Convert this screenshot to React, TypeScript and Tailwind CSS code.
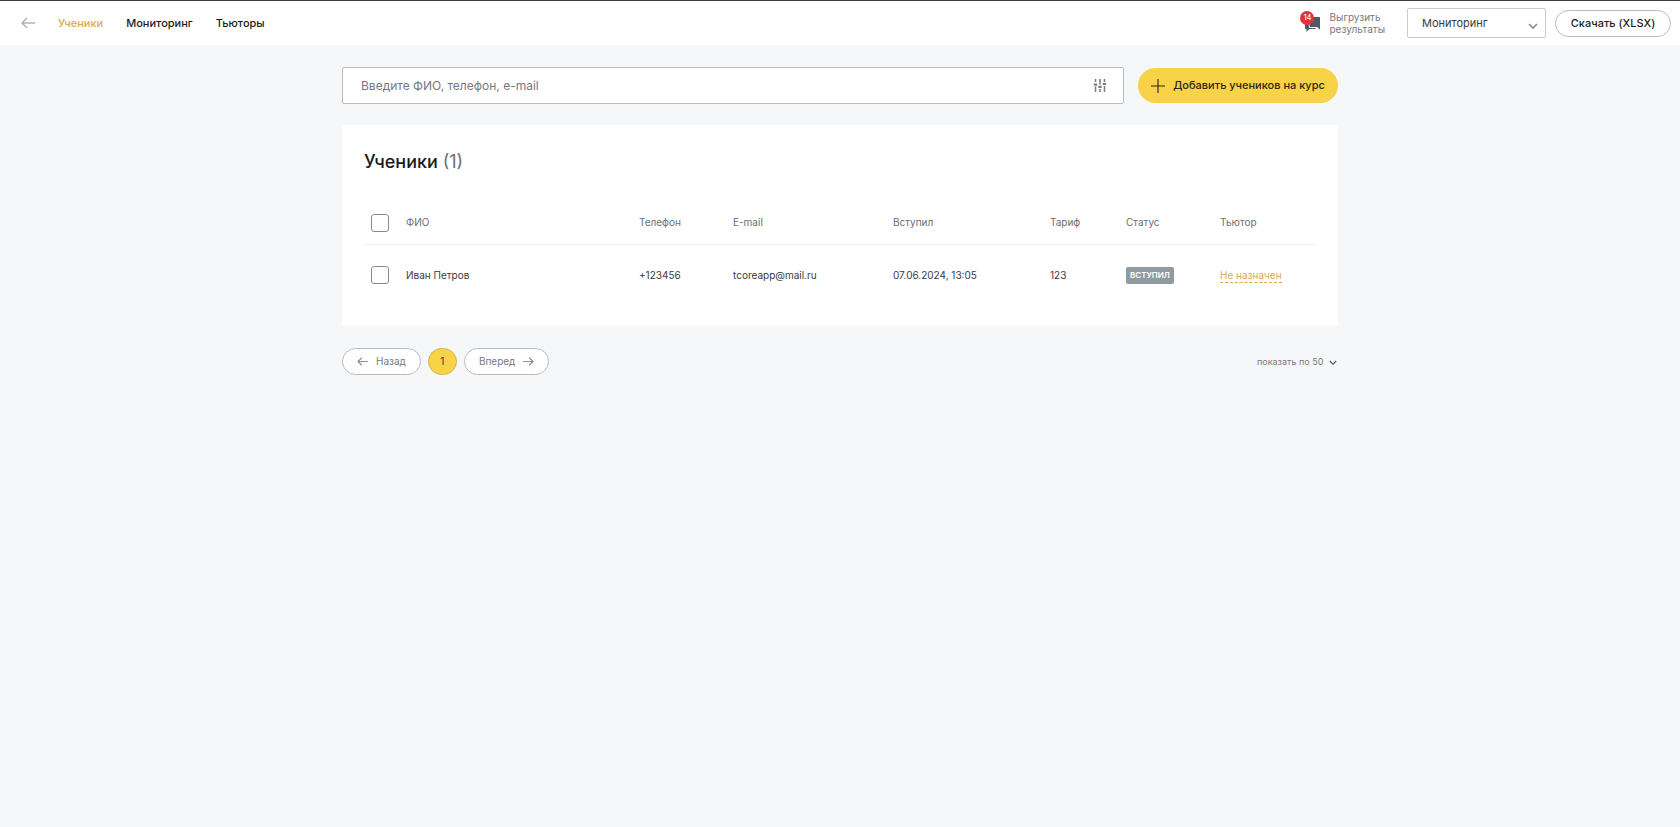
import React, { useState } from 'react';

interface IconProps {
    className?: string;
}

interface Student {
    id: number;
    name: string;
    phone: string;
    email: string;
    joinedAt: string;
    tariff: string;
    status: string;
    tutor: string | null;
}

const students: Student[] = [
    {
        id: 1,
        name: 'Иван Петров',
        phone: '+123456',
        email: 'tcoreapp@mail.ru',
        joinedAt: '07.06.2024, 13:05',
        tariff: '123',
        status: 'Вступил',
        tutor: null,
    },
];

const ArrowLeftIcon: React.FC<IconProps> = ({ className }) => (
    <svg className={className} viewBox="0 0 14 12" fill="none" stroke="currentColor" strokeWidth="1.5" aria-hidden="true">
        <path d="M14 6H1M6 1L1 6l5 5" />
    </svg>
);

const ArrowRightIcon: React.FC<IconProps> = ({ className }) => (
    <svg className={className} viewBox="0 0 14 12" fill="none" stroke="currentColor" strokeWidth="1.5" aria-hidden="true">
        <path d="M0 6h13M8 1l5 5-5 5" />
    </svg>
);

const ChevronIcon: React.FC<IconProps> = ({ className }) => (
    <svg className={className} viewBox="0 0 10 7" fill="none" stroke="currentColor" strokeWidth="1.6" aria-hidden="true">
        <path d="M1 1l4 4 4-4" />
    </svg>
);

const PlusIcon: React.FC<IconProps> = ({ className }) => (
    <svg className={className} viewBox="0 0 14 14" fill="none" stroke="currentColor" strokeWidth="1.1" aria-hidden="true">
        <path d="M7 0v14M0 7h14" />
    </svg>
);

const SlidersIcon: React.FC<IconProps> = ({ className }) => (
    <svg className={className} viewBox="0 0 14 13" fill="none" stroke="currentColor" strokeWidth="1.6" aria-hidden="true">
        <path d="M2.5 0v3M2.5 7.5V13M7 0v5.5M7 10v3M11.5 0v3M11.5 7v6" />
        <path d="M.8 5.6h3.4M5.3 7.8h3.4M9.8 5h3.4" strokeWidth="2.2" />
    </svg>
);

const ChatIcon: React.FC<IconProps> = ({ className }) => (
    <svg className={className} viewBox="0 0 15 15" fill="currentColor" aria-hidden="true">
        <path d="M5 0h9a1 1 0 0 1 1 1v11.8L12.3 10H4.6V.4z" />
        <path d="M0 4.5h3.8V10a1.1 1.1 0 0 0 1.1 1.1h5.8V12H4.4l-2.9 3v-3H1a1 1 0 0 1-1-1z" />
    </svg>
);

const Header: React.FC = () => (
    <header className="flex h-[45px] items-center justify-between border-t border-[#3d3b3d] bg-white pl-[21px] pr-[9px]">
        <nav className="flex items-center gap-[23px] text-[11px] font-medium text-[#1c1c1e]">
            <a href="#back" aria-label="Назад" className="text-[#b4b4b4]">
                <ArrowLeftIcon className="h-[12px] w-[14px]" />
            </a>
            <a href="#students" className="text-[#dba94e]">Ученики</a>
            <a href="#monitoring">Мониторинг</a>
            <a href="#tutors">Тьюторы</a>
        </nav>
        <div className="flex items-center">
            <a href="#export" className="mr-[22px] flex items-center gap-[9px] text-[10px] leading-[12px] text-[#77797c]">
                <span className="relative pl-[5px] pt-[2px]">
                    <ChatIcon className="h-[15px] w-[15px] text-[#4d5a63]" />
                    <span className="absolute -top-[4px] left-0 flex h-[14px] w-[14px] items-center justify-center rounded-full bg-[#e0323c] text-[7px] font-medium text-white">14</span>
                </span>
                <span>Выгрузить<br />результаты</span>
            </a>
            <div className="relative mr-[9px]">
                <select aria-label="Тип отчёта" className="h-[30px] w-[139px] appearance-none rounded-[2px] border border-[#c9cbce] bg-white pl-[14px] text-[11px] text-[#3a3b3d]">
                    <option>Мониторинг</option>
                </select>
                <ChevronIcon className="pointer-events-none absolute right-[8px] top-[15px] h-[7px] w-[10px] text-[#8a8c8e]" />
            </div>
            <button className="h-[27px] w-[116px] rounded-full border border-[#b9bbbd] bg-white text-[11px] font-medium text-[#1c1c1e]">
                Скачать (XLSX)
            </button>
        </div>
    </header>
);

const checkboxClass = 'block h-[18px] w-[18px] appearance-none rounded-[3px] border border-[#858b90] bg-white checked:bg-[#f8d347]';

const StudentsTable: React.FC = () => {
    const [selected, setSelected] = useState<number[]>([]);
    const allSelected = selected.length === students.length;

    const toggle = (id: number) => {
        setSelected(selected.includes(id) ? selected.filter((s) => s !== id) : [...selected, id]);
    };

    return (
        <table className="w-full table-fixed text-left text-[10px] text-[#3a3b3d]">
            <colgroup>
                <col className="w-[42px]" />
                <col className="w-[233px]" />
                <col className="w-[94px]" />
                <col className="w-[160px]" />
                <col className="w-[157px]" />
                <col className="w-[76px]" />
                <col className="w-[94px]" />
                <col />
            </colgroup>
            <thead>
                <tr className="h-[42px] border-b border-[#f0f1f2] text-[#6c6e71]">
                    <th className="pl-[7px]">
                        <input
                            type="checkbox"
                            aria-label="Выбрать всех"
                            className={checkboxClass}
                            checked={allSelected}
                            onChange={() => setSelected(allSelected ? [] : students.map((s) => s.id))}
                        />
                    </th>
                    <th className="font-normal">ФИО</th>
                    <th className="font-normal">Телефон</th>
                    <th className="font-normal">E-mail</th>
                    <th className="font-normal">Вступил</th>
                    <th className="font-normal">Тариф</th>
                    <th className="font-normal">Статус</th>
                    <th className="font-normal">Тьютор</th>
                </tr>
            </thead>
            <tbody>
                {students.map((student) => (
                    <tr key={student.id} className="h-[62px]">
                        <td className="pl-[7px]">
                            <input
                                type="checkbox"
                                aria-label={student.name}
                                className={checkboxClass}
                                checked={selected.includes(student.id)}
                                onChange={() => toggle(student.id)}
                            />
                        </td>
                        <td>{student.name}</td>
                        <td>{student.phone}</td>
                        <td>{student.email}</td>
                        <td>{student.joinedAt}</td>
                        <td>{student.tariff}</td>
                        <td>
                            <span className="block w-fit rounded-[2px] bg-[#8f9ba1] px-[4px] text-[8px] font-semibold uppercase leading-[17px] text-white">
                                {student.status}
                            </span>
                        </td>
                        <td>
                            <a href="#tutor" className="block w-fit border-b border-dashed border-[#dba94e] leading-[14px] text-[#dba94e]">
                                {student.tutor ?? 'Не назначен'}
                            </a>
                        </td>
                    </tr>
                ))}
            </tbody>
        </table>
    );
};

const Pagination: React.FC = () => (
    <div className="mt-[22px] flex items-center justify-between text-[10px] text-[#77797c]">
        <div className="flex gap-[7px]">
            <button className="flex h-[27px] items-center gap-[8px] rounded-full border border-[#b9bbbd] bg-white px-[14px]">
                <ArrowLeftIcon className="h-[9px] w-[11px] text-[#8a8c8e]" />
                Назад
            </button>
            <button className="h-[27px] w-[29px] rounded-full border border-[#d3b64e] bg-[#f8d347] text-[#3a3420]">1</button>
            <button className="flex h-[27px] items-center gap-[8px] rounded-full border border-[#b9bbbd] bg-white px-[14px]">
                Вперед
                <ArrowRightIcon className="h-[9px] w-[11px] text-[#8a8c8e]" />
            </button>
        </div>
        <div className="relative">
            <select aria-label="Показать по" className="block appearance-none bg-transparent pr-[14px] text-[9px]">
                <option>показать по 50</option>
            </select>
            <ChevronIcon className="pointer-events-none absolute right-[1px] top-[5px] h-[6px] w-[8px] text-[#5a5c5e]" />
        </div>
    </div>
);

const App: React.FC = () => {
    const [query, setQuery] = useState('');

    return (
        <div className="min-h-screen bg-[#f5f7f9] font-['Inter',sans-serif]">
            <Header />
            <main className="mx-auto max-w-[996px] pt-[22px]">
                <div className="flex items-center gap-[14px]">
                    <div className="relative flex-1">
                        <input
                            type="text"
                            aria-label="Поиск"
                            value={query}
                            onChange={(e) => setQuery(e.target.value)}
                            placeholder="Введите ФИО, телефон, e-mail"
                            className="block h-[37px] w-full rounded-[2px] border border-[#b9bcc0] bg-white px-[18px] text-[12px] placeholder:text-[#77797c]"
                        />
                        <button aria-label="Фильтры" className="absolute right-[17px] top-[12px] text-[#7c8084]">
                            <SlidersIcon className="h-[13px] w-[14px]" />
                        </button>
                    </div>
                    <button className="flex h-[35px] w-[200px] items-center justify-center gap-[8px] whitespace-nowrap rounded-full bg-[#f8d347] text-[11px] font-medium text-[#2b2615]">
                        <PlusIcon className="h-[14px] w-[14px]" />
                        Добавить учеников на курс
                    </button>
                </div>
                <section className="mt-[21px] bg-white px-[22px] pb-[20px] pt-[24px]">
                    <h1 className="mb-[28px] text-[18px] font-medium leading-[25px] text-[#1c1c1e]">
                        Ученики <span className="font-normal text-[#6c6e71]">({students.length})</span>
                    </h1>
                    <StudentsTable />
                </section>
                <Pagination />
            </main>
        </div>
    );
};

export default App;
